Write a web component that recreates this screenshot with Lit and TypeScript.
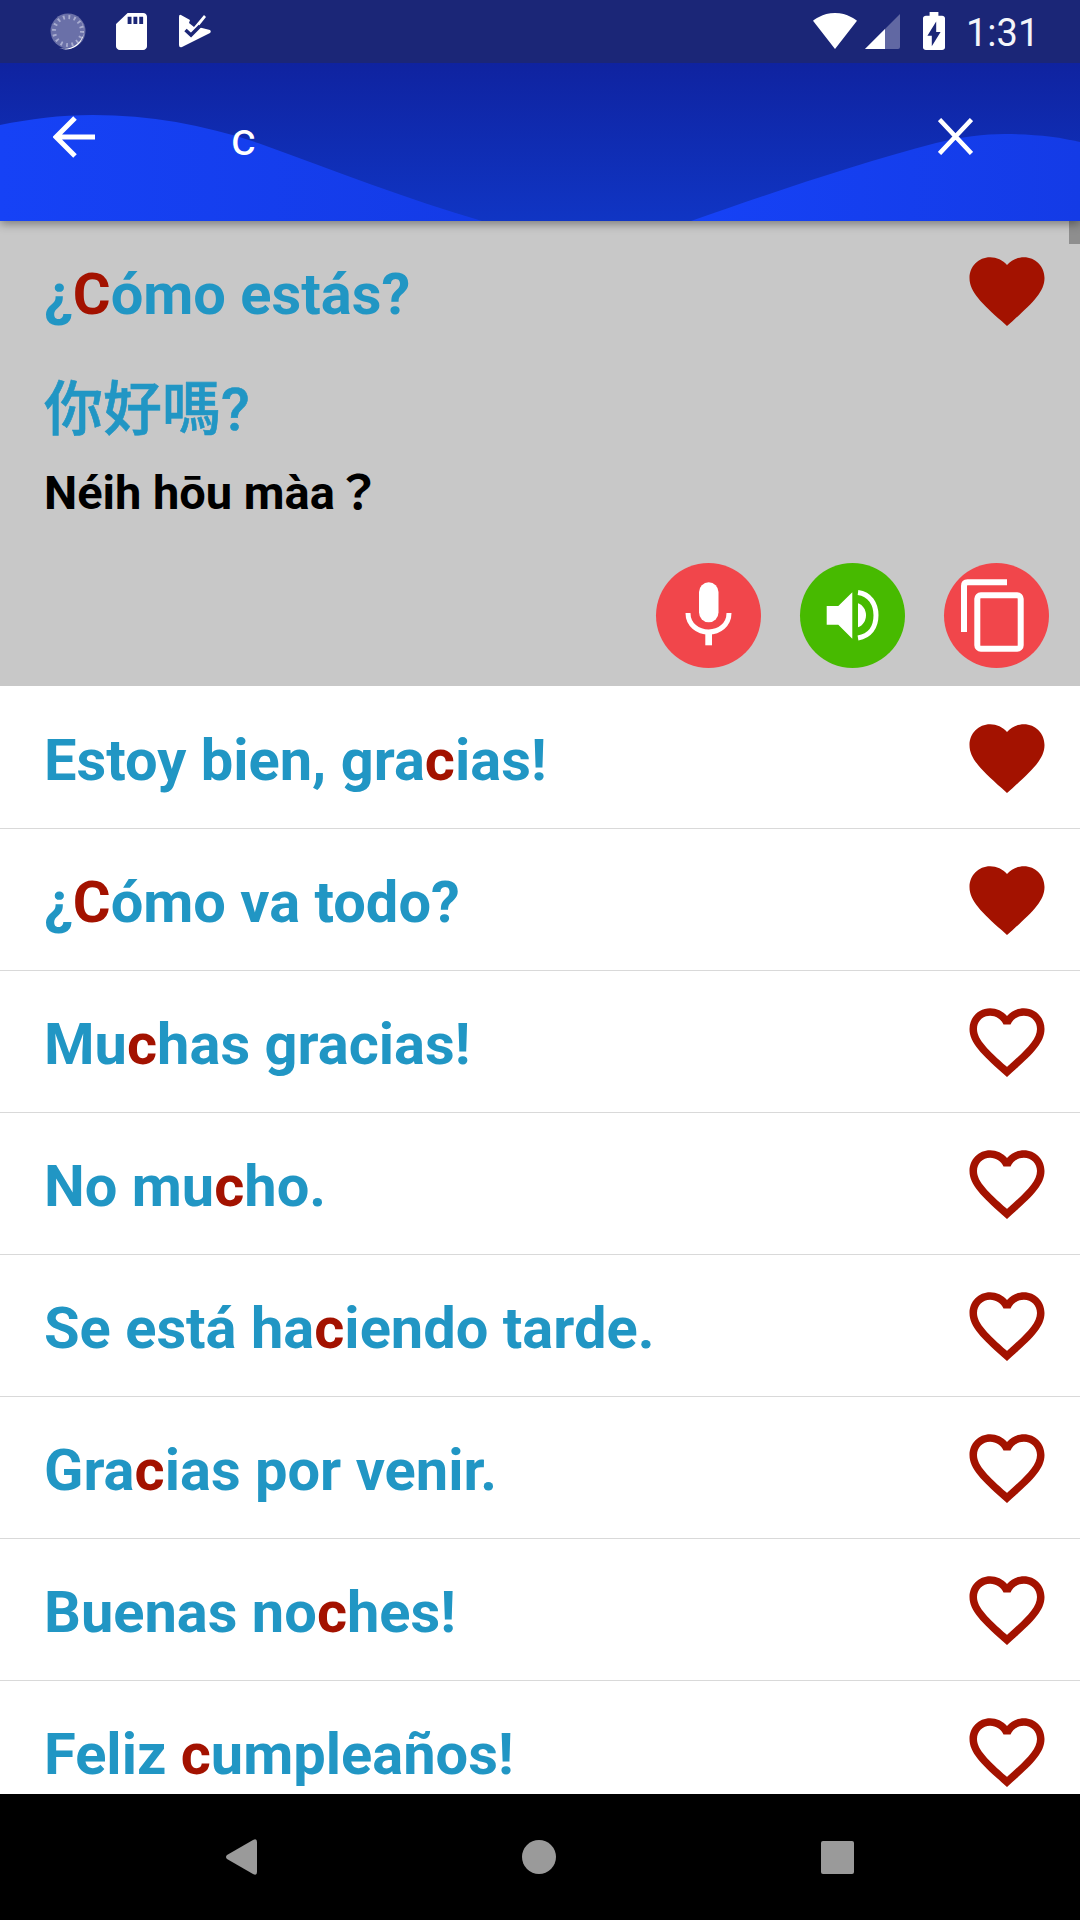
import { LitElement, html, css } from "lit";
import { customElement } from "lit/decorators.js";

const QUERY = "c";
const PHRASES: { text: string; fav: boolean }[] = [
  { text: "Estoy bien, gracias!", fav: true },
  { text: "¿Cómo va todo?", fav: true },
  { text: "Muchas gracias!", fav: false },
  { text: "No mucho.", fav: false },
  { text: "Se está haciendo tarde.", fav: false },
  { text: "Gracias por venir.", fav: false },
  { text: "Buenas noches!", fav: false },
  { text: "Feliz cumpleaños!", fav: false },
];

const HEART_FILLED =
  "M12 21.35l-1.45-1.32C5.4 15.36 2 12.28 2 8.5 2 5.42 4.42 3 7.5 3c1.74 0 3.41.81 4.5 2.09C13.09 3.81 14.76 3 16.5 3 19.58 3 22 5.42 22 8.5c0 3.78-3.4 6.86-8.55 11.54L12 21.35z";
const HEART_OUTLINE =
  "M16.5 3c-1.74 0-3.41.81-4.5 2.09C10.91 3.81 9.24 3 7.5 3 4.42 3 2 5.42 2 8.5c0 3.78 3.4 6.86 8.55 11.54L12 21.35l1.45-1.32C18.6 15.36 22 12.28 22 8.5 22 5.42 19.58 3 16.5 3zm-4.4 15.55l-.1.1-.1-.1C7.14 14.24 4 11.39 4 8.5 4 6.5 5.5 5 7.5 5c1.54 0 3.04.99 3.57 2.36h1.87C13.46 5.99 14.96 5 16.5 5c2 0 3.5 1.5 3.5 3.5 0 2.89-3.14 5.74-7.9 10.05z";

function highlight(text: string) {
  const i = text.toLowerCase().indexOf(QUERY);
  if (i < 0) return text;
  return html`${text.slice(0, i)}<span class="hit">${text.charAt(i)}</span>${text.slice(i + 1)}`;
}

function heart(fav: boolean) {
  return html`<svg class="heart" viewBox="0 0 24 24"><path d=${fav ? HEART_FILLED : HEART_OUTLINE}></path></svg>`;
}

@customElement("app-root")
export class AppRoot extends LitElement {
  static styles = css`
    :host {
      display: block;
      width: 1080px;
      height: 1920px;
      font-family: Roboto, "Noto Sans CJK TC", sans-serif;
      background: #fff;
    }
    .page { display: flex; flex-direction: column; height: 1920px; overflow: hidden; position: relative; }

    .status {
      height: 63px; flex: none; background: #1b2677; display: flex; align-items: center;
      padding: 0 46px 1px 50px; box-sizing: border-box; color: #fff; position: relative; z-index: 3;
    }
    .status svg { display: block; fill: #fff; flex: none; }
    .sd { margin-left: 29px; }
    .chk { margin-left: 32px; }
    .spacer { flex: 1; }
    .sig { margin-left: 8px; }
    .bat { margin-left: 23px; }
    .time { margin-left: 21px; font-size: 38px; line-height: 66px; height: 63px; width: 68px; color: #f4f5fa; white-space: nowrap; }

    .toolbar {
      height: 158px; flex: none; position: relative; z-index: 2; display: flex; align-items: center;
      padding: 0 107px 0 53px; box-sizing: border-box;
      background: linear-gradient(180deg, #0f23a0 0%, #1035c4 100%);
      box-shadow: 0 3px 9px rgba(0, 0, 0, 0.38);
      color: #fff;
    }
    .wave { position: absolute; left: 0; top: 0; width: 1080px; height: 158px; }
    .tb-icon { position: relative; display: block; fill: none; stroke: #fff; margin-bottom: 11px; flex: none; }
    .query { position: relative; font-size: 47px; line-height: 48px; margin-left: 136px; flex: 1; margin-bottom: 6px; }

    .card {
      flex: none; height: 465px; background: #c8c8c8; box-sizing: border-box; position: relative;
      display: flex; flex-direction: column;
    }
    .thumb { position: absolute; right: 0; top: 0; width: 11px; height: 23px; background: #8e8e8e; }
    .top { height: 140px; display: flex; align-items: center; padding: 0 28.5px 0 44px; flex: none; }
    .es { flex: 1; font-size: 57.8px; line-height: 68px; padding-top: 5px; font-weight: 700; color: #2196c4; white-space: nowrap; }
    .hit { color: #a31200; }
    .heart { width: 90px; height: 90px; display: block; fill: #a31200; flex: none; }
    .zh {
      font-size: 59px; line-height: 70px; font-weight: 500; color: #2196c4; padding-left: 44px; margin-top: 14px;
      -webkit-text-stroke: 0.6px #2196c4;
    }
    .py { font-size: 47px; line-height: 56px; font-weight: 700; color: #000; padding-left: 44px; margin-top: 20px; }
    .actions { margin-top: auto; display: flex; justify-content: flex-end; gap: 39px; padding: 0 31px 18px 0; }
    .fab { width: 105px; height: 105px; border-radius: 50%; flex: none; }
    .fab svg { display: block; width: 105px; height: 105px; }
    .red { background: #f1464b; }
    .green { background: #47ba00; }

    .list { flex: 1; min-height: 0; overflow: hidden; background: #fff; padding-top: 1px; }
    .row {
      height: 142px; box-sizing: border-box; border-bottom: 1px solid #d9d9d9; display: flex; align-items: center;
      padding: 0 28.5px 0 44px;
    }

    .nav {
      height: 126px; flex: none; background: #000; display: flex; align-items: center; position: relative;
      padding: 0 226px 0 226px; box-sizing: border-box; justify-content: space-between;
    }
    .nav svg { display: block; fill: #9a9a9a; flex: none; }
  `;

  private status() {
    return html`<div class="status">
      <svg width="37" height="37" viewBox="0 0 37 37">
        <circle cx="18" cy="18" r="17.5" fill="#6a70a8"></circle>
        <circle cx="18" cy="18" r="14" fill="none" stroke="#a9add0" stroke-width="4" stroke-dasharray="1.8 3.7"></circle>
        <path d="M29 6 A18 18 0 0 1 9 35 A20 20 0 0 0 30 28 A16 16 0 0 0 29 6 Z" fill="#fff"></path>
      </svg>
      <svg class="sd" width="31" height="37" viewBox="4 2 16 20" preserveAspectRatio="none">
        <path d="M18 2h-8L4.02 8 4 20c0 1.1.9 2 2 2h12c1.1 0 2-.9 2-2V4c0-1.1-.9-2-2-2zm-6 6h-2V4h2v4zm3 0h-2V4h2v4zm3 0h-2V4h2v4z"></path>
      </svg>
      <svg class="chk" width="32" height="34" viewBox="0 0 32 34">
        <path d="M2 1 L11 6 L10 9 L15 13 L25 1 L27 3 L19 13 L31 16 Q32.500 17.500 31 19 L3 33 Q0 34 0 31 V3 Q0 0 2 1 Z"></path>
        <path d="M6.500 16 L12 21 L21 12" fill="none" stroke="#1b2677" stroke-width="3.500"></path>
      </svg>
      <div class="spacer"></div>
      <svg width="44" height="36" viewBox="0.36 3 23.28 18.49" preserveAspectRatio="none">
        <path d="M12.01 21.49L23.64 7c-.45-.34-4.93-4-11.64-4C5.28 3 .81 6.66.36 7l11.64 14.5.01-.01z"></path>
      </svg>
      <svg class="sig" width="35" height="36" viewBox="0 0 35 36">
        <path d="M0 36 L35 1 V34 Q35 36 33 36 Z" fill="#6168a3"></path>
        <path d="M0 36 L20 16 V36 Z"></path>
      </svg>
      <svg class="bat" width="22" height="38" viewBox="7 2 10 20" preserveAspectRatio="none">
        <path d="M15.670 4H14V2h-4v2H8.330C7.600 4 7 4.600 7 5.330v15.330C7 21.400 7.600 22 8.330 22h7.330c.74 0 1.340-.6 1.340-1.330V5.330C17 4.600 16.400 4 15.670 4zM11 20v-5.500H9L13 7v5.500h2L11 20z"></path>
      </svg>
      <div class="time">1:31</div>
    </div>`;
  }

  private toolbar() {
    return html`<div class="toolbar">
      <svg class="wave" viewBox="0 0 1080 158">
        <defs>
          <linearGradient id="lw" x1="0" y1="0" x2="1" y2="0">
            <stop offset="0" stop-color="#1642f6"></stop>
            <stop offset="1" stop-color="#143be6"></stop>
          </linearGradient>
        </defs>
        <path fill="url(#lw)" d="M0 62 C30 56 60 52 93 52 C150 52 205 62 258 80 C335 108 410 137 482 158 H0 Z"></path>
        <path fill="url(#lw)" d="M691 158 C770 130 860 100 936 80 C960 74 985 71 1005 71 C1035 71 1060 74 1080 79 V158 Z"></path>
      </svg>
      <svg class="tb-icon" width="42" height="42" viewBox="0 0 42 42" stroke-width="5">
        <path d="M42 21 H4 M22 2 L3 21 L22 40"></path>
      </svg>
      <div class="query">${QUERY}</div>
      <svg class="tb-icon" width="35" height="37" viewBox="0 0 35 37" stroke-width="4.500">
        <path d="M1.500 1.500 L33.500 35.500 M33.500 1.500 L1.500 35.500"></path>
      </svg>
    </div>`;
  }

  private card() {
    return html`<div class="card">
      <div class="thumb"></div>
      <div class="top">
        <div class="es">${highlight("¿Cómo estás?")}</div>
        ${heart(true)}
      </div>
      <div class="zh" lang="zh-Hant">你好嗎?</div>
      <div class="py">Néih hōu màa？</div>
      <div class="actions">
        <div class="fab red">
          <svg viewBox="0 0 105 105" fill="#fff">
            <rect x="43" y="19.300" width="19.500" height="40" rx="9.750"></rect>
            <path d="M32 50 C32 62 42 69 52.700 69 C63 69 73 62 73 50" fill="none" stroke="#fff" stroke-width="5"></path>
            <rect x="49.300" y="69" width="6.700" height="13.300"></rect>
          </svg>
        </div>
        <div class="fab green">
          <svg viewBox="0 0 105 105" fill="#fff">
            <path d="M26.700 43 H38.300 L52.300 29.300 V75.700 L38.300 61.700 H26.700 Z"></path>
            <path d="M58 40.300 C63 42 66 47 66 52.300 C66 57.600 63 62.600 58 64.300 Z"></path>
            <path d="M58 29.500 C70 31 76 41 76 52.300 C76 64 70 73 58 75" fill="none" stroke="#fff" stroke-width="5"></path>
          </svg>
        </div>
        <div class="fab red">
          <svg viewBox="0 0 105 105" fill="none" stroke="#fff" stroke-width="6">
            <path d="M20 69 V23 Q20 19.300 23.500 19.300 H63"></path>
            <rect x="33.300" y="32.300" width="43.400" height="53.400" rx="3.500"></rect>
          </svg>
        </div>
      </div>
    </div>`;
  }

  render() {
    return html`<div class="page">
      ${this.status()} ${this.toolbar()} ${this.card()}
      <div class="list">
        ${PHRASES.map((p) => html`<div class="row"><div class="es">${highlight(p.text)}</div>${heart(p.fav)}</div>`)}
      </div>
      <div class="nav">
        <svg width="31" height="36" viewBox="0 0 31 36"><path d="M1 16 L27 1 Q31 -1 31 3 V33 Q31 37 27 35 L1 20 Q-1 18 1 16 Z"></path></svg>
        <svg width="34" height="34" viewBox="0 0 34 34"><circle cx="17" cy="17" r="17"></circle></svg>
        <svg width="33" height="33" viewBox="0 0 33 33"><rect width="33" height="33" rx="2"></rect></svg>
      </div>
    </div>`;
  }
}
